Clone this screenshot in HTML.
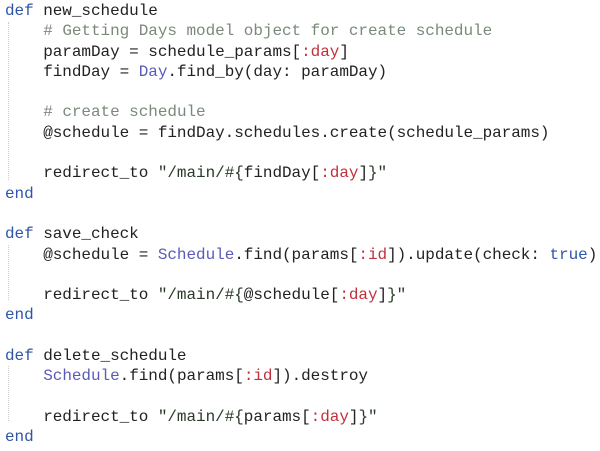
<!DOCTYPE html>
<html><head><style>
html,body{margin:0;padding:0;background:#fff;}
body{width:600px;height:451px;overflow:hidden;position:relative;}
pre{margin:0;position:absolute;left:5px;top:1px;font-family:"Liberation Mono",monospace;font-size:16px;line-height:20.3px;color:#222;letter-spacing:-0.05px;}
.k{color:#2f55a8}.c{color:#7a8a7a}.s{color:#2a3a2a}.y{color:#c0303a}.t{color:#5a5ab8}
.g{position:absolute;left:8px;width:0;border-left:1px dotted #ccc;}
</style></head><body>
<div class="g" style="top:22px;height:158px"></div>
<div class="g" style="top:245px;height:55px"></div>
<div class="g" style="top:366px;height:55px"></div>
<pre><span class="k">def</span> new_schedule
    <span class="c"># Getting Days model object for create schedule</span>
    paramDay = schedule_params[<span class="y">:day</span>]
    findDay = <span class="t">Day</span>.find_by(day: paramDay)

    <span class="c"># create schedule</span>
    @schedule = findDay.schedules.create(schedule_params)

    redirect_to <span class="s">"/main/#{</span>findDay[<span class="y">:day</span>]<span class="s">}"</span>
<span class="k">end</span>

<span class="k">def</span> save_check
    @schedule = <span class="t">Schedule</span>.find(params[<span class="y">:id</span>]).update(check: <span class="k">true</span>)

    redirect_to <span class="s">"/main/#{</span>@schedule[<span class="y">:day</span>]<span class="s">}"</span>
<span class="k">end</span>

<span class="k">def</span> delete_schedule
    <span class="t">Schedule</span>.find(params[<span class="y">:id</span>]).destroy

    redirect_to <span class="s">"/main/#{</span>params[<span class="y">:day</span>]<span class="s">}"</span>
<span class="k">end</span></pre>
</body></html>
